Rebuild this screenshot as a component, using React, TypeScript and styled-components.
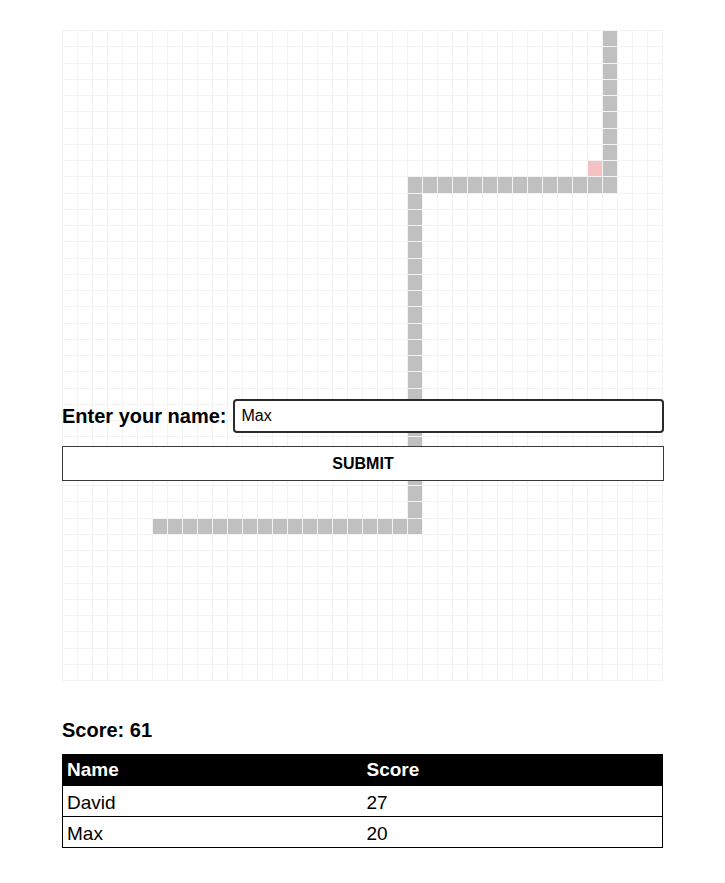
import React from "react";
import styled, { createGlobalStyle } from "styled-components";

const COLS = 40;
const ROWS = 40;

const snake: Array<[number, number]> = [];
for (let r = 0; r <= 9; r++) snake.push([36, r]);
for (let c = 23; c <= 35; c++) snake.push([c, 9]);
for (let r = 10; r <= 30; r++) snake.push([23, r]);
for (let c = 6; c <= 22; c++) snake.push([c, 30]);
const snakeSet = new Set(snake.map(([c, r]) => `${c}-${r}`));
const food = "35-8";

const GlobalStyle = createGlobalStyle`
  html, body {
    margin: 0;
    padding: 0;
    background: #ffffff;
  }
  body {
    font-family: "Liberation Sans", Arial, sans-serif;
    color: #000;
  }
`;

const Page = styled.main`
  width: 601px;
  margin: 0 auto;
  padding-top: 30px;
  display: flex;
  flex-direction: column;
`;

const Board = styled.div`
  position: relative;
  width: 601px;
  height: 651px;
  box-sizing: border-box;
  padding: 1px;
  background: #f3f3f3;
  display: grid;
  grid-template-columns: repeat(${COLS}, 1fr);
  grid-template-rows: repeat(${ROWS}, 1fr);
  gap: 1px;
`;

type Kind = "empty" | "snake" | "food";

const Cell = styled.div<{ $kind: Kind }>`
  background: ${(p) =>
    p.$kind === "snake" ? "#c0c0c0" : p.$kind === "food" ? "#f4c2c2" : "#ffffff"};
`;

const NameForm = styled.form`
  position: absolute;
  left: 0;
  right: -1px;
  top: 369px;
  display: flex;
  flex-direction: column;
  gap: 13px;
`;

const NameRow = styled.div`
  display: flex;
  align-items: center;
  gap: 7px;
`;

const Label = styled.label`
  font-size: 20px;
  font-weight: bold;
  white-space: nowrap;
`;

const NameInput = styled.input`
  flex: 1;
  height: 34px;
  box-sizing: border-box;
  border: 2px solid #2a2a2a;
  border-radius: 4px;
  padding: 0 6px;
  font-family: "Liberation Sans", Arial, sans-serif;
  font-size: 16px;
  color: #000;
  background: #fff;
  outline: none;
`;

const SubmitButton = styled.button`
  height: 35px;
  width: 100%;
  box-sizing: border-box;
  border: 1px solid #3a3a3a;
  background: #fff;
  font-family: "Liberation Sans", Arial, sans-serif;
  font-size: 16px;
  font-weight: bold;
  color: #000;
  padding: 0;
`;

const ScoreText = styled.div`
  margin-top: 38px;
  font-size: 20px;
  font-weight: bold;
  line-height: 23px;
`;

const Table = styled.table`
  margin-top: 12px;
  width: 601px;
  border-collapse: collapse;
  border: 1px solid #000;
  font-size: 19px;
`;

const HeadCell = styled.th`
  background: #000;
  color: #fff;
  font-weight: bold;
  text-align: left;
  padding: 4px 5px 4px 4px;
  height: 31px;
  box-sizing: border-box;
  width: 50%;
`;

const Row = styled.tr`
  border-top: 1px solid #000;
`;

const DataCell = styled.td`
  padding: 5px 5px 2px 4px;
  height: 31px;
  box-sizing: border-box;
  text-align: left;
`;

const scores = [
  { name: "David", score: 27 },
  { name: "Max", score: 20 },
];

export default function App() {
  const cells = [];
  for (let r = 0; r < ROWS; r++) {
    for (let c = 0; c < COLS; c++) {
      const key = `${c}-${r}`;
      const kind: Kind = snakeSet.has(key) ? "snake" : key === food ? "food" : "empty";
      cells.push(<Cell key={key} $kind={kind} />);
    }
  }
  return (
    <>
      <GlobalStyle />
      <Page>
        <Board>
          {cells}
          <NameForm onSubmit={(e) => e.preventDefault()}>
            <NameRow>
              <Label htmlFor="player">Enter your name:</Label>
              <NameInput id="player" defaultValue="Max" />
            </NameRow>
            <SubmitButton type="submit">SUBMIT</SubmitButton>
          </NameForm>
        </Board>
        <ScoreText>Score: 61</ScoreText>
        <Table>
          <thead>
            <tr>
              <HeadCell>Name</HeadCell>
              <HeadCell>Score</HeadCell>
            </tr>
          </thead>
          <tbody>
            {scores.map((s) => (
              <Row key={s.name}>
                <DataCell>{s.name}</DataCell>
                <DataCell>{s.score}</DataCell>
              </Row>
            ))}
          </tbody>
        </Table>
      </Page>
    </>
  );
}
